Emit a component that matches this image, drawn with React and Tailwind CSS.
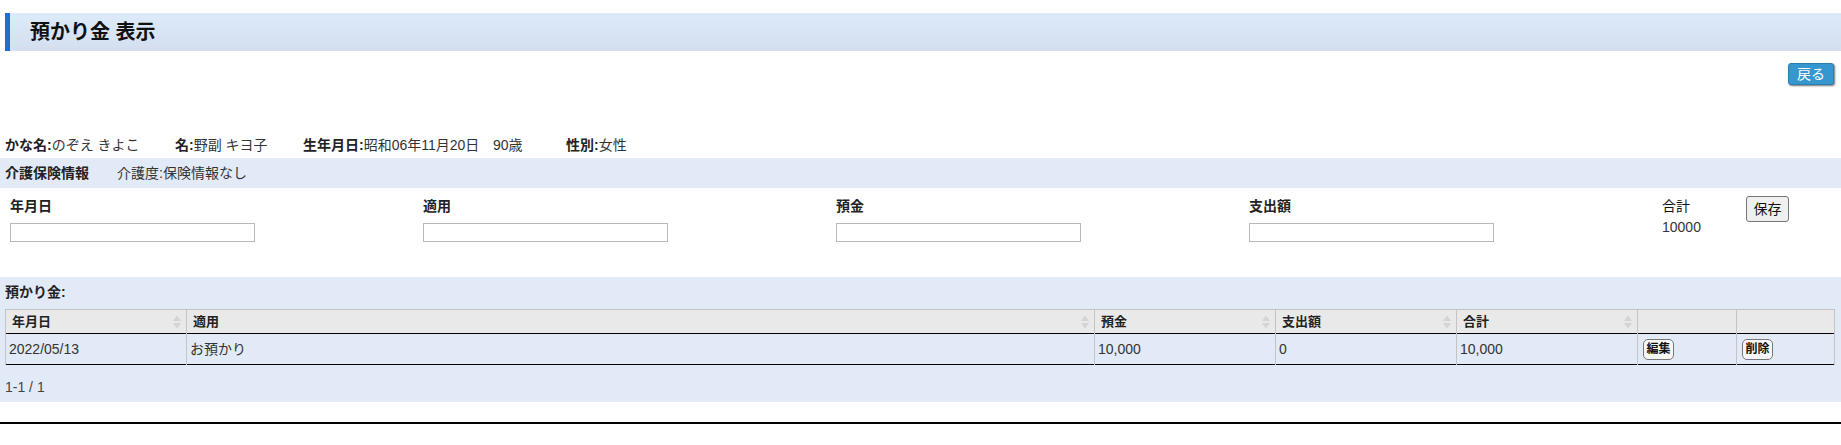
import React from "react";

const SortIcon = () => (
  <svg width="8" height="14" viewBox="0 0 8 14" className="absolute right-[5px] top-1/2 -translate-y-1/2">
    <polygon points="4,0.5 8,6 0,6" fill="#d4d4d4" />
    <polygon points="0,8 8,8 4,13.5" fill="#d4d4d4" />
  </svg>
);

const Th = ({ children, sort, className = "" }) => (
  <th className={`relative h-[22px] border-x border-[#c4c4c4] px-[6px] text-left align-middle text-[13px] font-bold text-[#222] ${className}`}>
    {children}
    {sort && <SortIcon />}
  </th>
);

const Td = ({ children, className = "" }) => (
  <td className={`h-[30px] border-x border-[#c4c4c4] px-[3px] align-middle text-[14px] text-[#333] ${className}`}>{children}</td>
);

const SmallBtn = ({ children }) => (
  <button className="ml-[2px] flex h-[21px] w-[31px] items-center justify-center rounded-[5px] border border-[#777] bg-[#f6f6f6] text-[12px] font-bold leading-none text-[#111]">
    {children}
  </button>
);

export default function App() {
  const fields = ["年月日", "適用", "預金", "支出額"];
  return (
    <div className="w-[1841px] bg-white pt-[13px] font-['Liberation_Sans','Noto_Sans_CJK_JP',sans-serif] text-[#333]">
      {/* title bar */}
      <div className="ml-[5px] flex h-[38px] items-center border-l-[5px] border-[#1b6fd0] bg-linear-to-b from-[#dcebf9] to-[#d4deef] pl-[20px]">
        <h1 className="text-[20px] font-bold leading-none text-[#111]">預かり金 表示</h1>
      </div>

      {/* back button */}
      <div className="mt-[12px] flex justify-end pr-[7px]">
        <button className="flex h-[22px] w-[46px] items-center justify-center rounded-[3px] border border-[#2a7fb0] bg-[#3497cf] text-[14px] leading-none text-white shadow-[1px_1px_2px_rgba(0,0,0,0.55)]">
          戻る
        </button>
      </div>

      {/* info row */}
      <div className="mt-[49px] flex h-[22px] items-center pl-[5px] text-[14px] leading-[22px]">
        <div className="w-[170px] whitespace-nowrap">
          <span className="font-bold text-[#222]">かな名:</span>のぞえ きよこ
        </div>
        <div className="w-[128px] whitespace-nowrap">
          <span className="font-bold text-[#222]">名:</span>野副 キヨ子
        </div>
        <div className="w-[190px] whitespace-nowrap">
          <span className="font-bold text-[#222]">生年月日:</span>昭和06年11月20日
        </div>
        <div className="w-[73px] whitespace-nowrap">90歳</div>
        <div className="whitespace-nowrap">
          <span className="font-bold text-[#222]">性別:</span>女性
        </div>
      </div>

      {/* insurance band */}
      <div className="mt-[2px] flex h-[30px] items-center bg-[#e2eaf7] pl-[5px] text-[14px]">
        <div className="w-[112px] font-bold text-[#222]">介護保険情報</div>
        <div>介護度:保険情報なし</div>
      </div>

      {/* form */}
      <div className="grid h-[89px] grid-cols-[413px_413px_413px_413px_84px_auto] pl-[10px] pt-[8px]">
        {fields.map((f) => (
          <div key={f} className="flex flex-col">
            <div className="h-[20px] text-[14px] font-bold leading-[20px] text-[#222]">{f}</div>
            <input className="mt-[7px] h-[19px] w-[245px] border border-[#b9b9b9] bg-white outline-none" />
          </div>
        ))}
        <div className="flex flex-col text-[14px]">
          <div className="h-[20px] leading-[20px] text-[#111]">合計</div>
          <div className="mt-[1px] h-[20px] leading-[20px] text-[#333]">10000</div>
        </div>
        <div>
          <button className="flex h-[26px] w-[43px] items-center justify-center rounded-[3px] border border-[#767676] bg-[#efefef] text-[14px] leading-none text-[#111]">
            保存
          </button>
        </div>
      </div>

      {/* list band */}
      <div className="h-[125px] bg-[#e2eaf7] pt-[5px]">
        <div className="h-[20px] pl-[5px] text-[14px] font-bold leading-[20px] text-[#222]">預かり金:</div>
        <div className="mt-[7px] pl-[5px]">
          <table className="w-[1829px] table-fixed border-collapse border-r border-[#c4c4c4]">
            <colgroup>
              <col className="w-[181px]" />
              <col className="w-[908px]" />
              <col className="w-[181px]" />
              <col className="w-[181px]" />
              <col className="w-[181px]" />
              <col className="w-[99px]" />
              <col className="w-[98px]" />
            </colgroup>
            <thead>
              <tr className="h-[24px] border-t border-b border-t-[#c4c4c4] border-b-black bg-[#e9e9e9]">
                <Th sort>年月日</Th>
                <Th sort>適用</Th>
                <Th sort>預金</Th>
                <Th sort>支出額</Th>
                <Th sort>合計</Th>
                <Th></Th>
                <Th></Th>
              </tr>
            </thead>
            <tbody>
              <tr className="h-[31px] border-b border-black bg-[#e2eaf7]">
                <Td>2022/05/13</Td>
                <Td>お預かり</Td>
                <Td>10,000</Td>
                <Td>0</Td>
                <Td>10,000</Td>
                <Td>
                  <SmallBtn>編集</SmallBtn>
                </Td>
                <Td>
                  <SmallBtn>削除</SmallBtn>
                </Td>
              </tr>
            </tbody>
          </table>
        </div>
        <div className="mt-[12px] h-[20px] pl-[5px] text-[14px] leading-[20px] text-[#444]">1-1 / 1</div>
      </div>

      {/* bottom rule */}
      <div className="mt-[20px] h-[2px] bg-black" />
      <div className="h-[21px]" />
    </div>
  );
}
